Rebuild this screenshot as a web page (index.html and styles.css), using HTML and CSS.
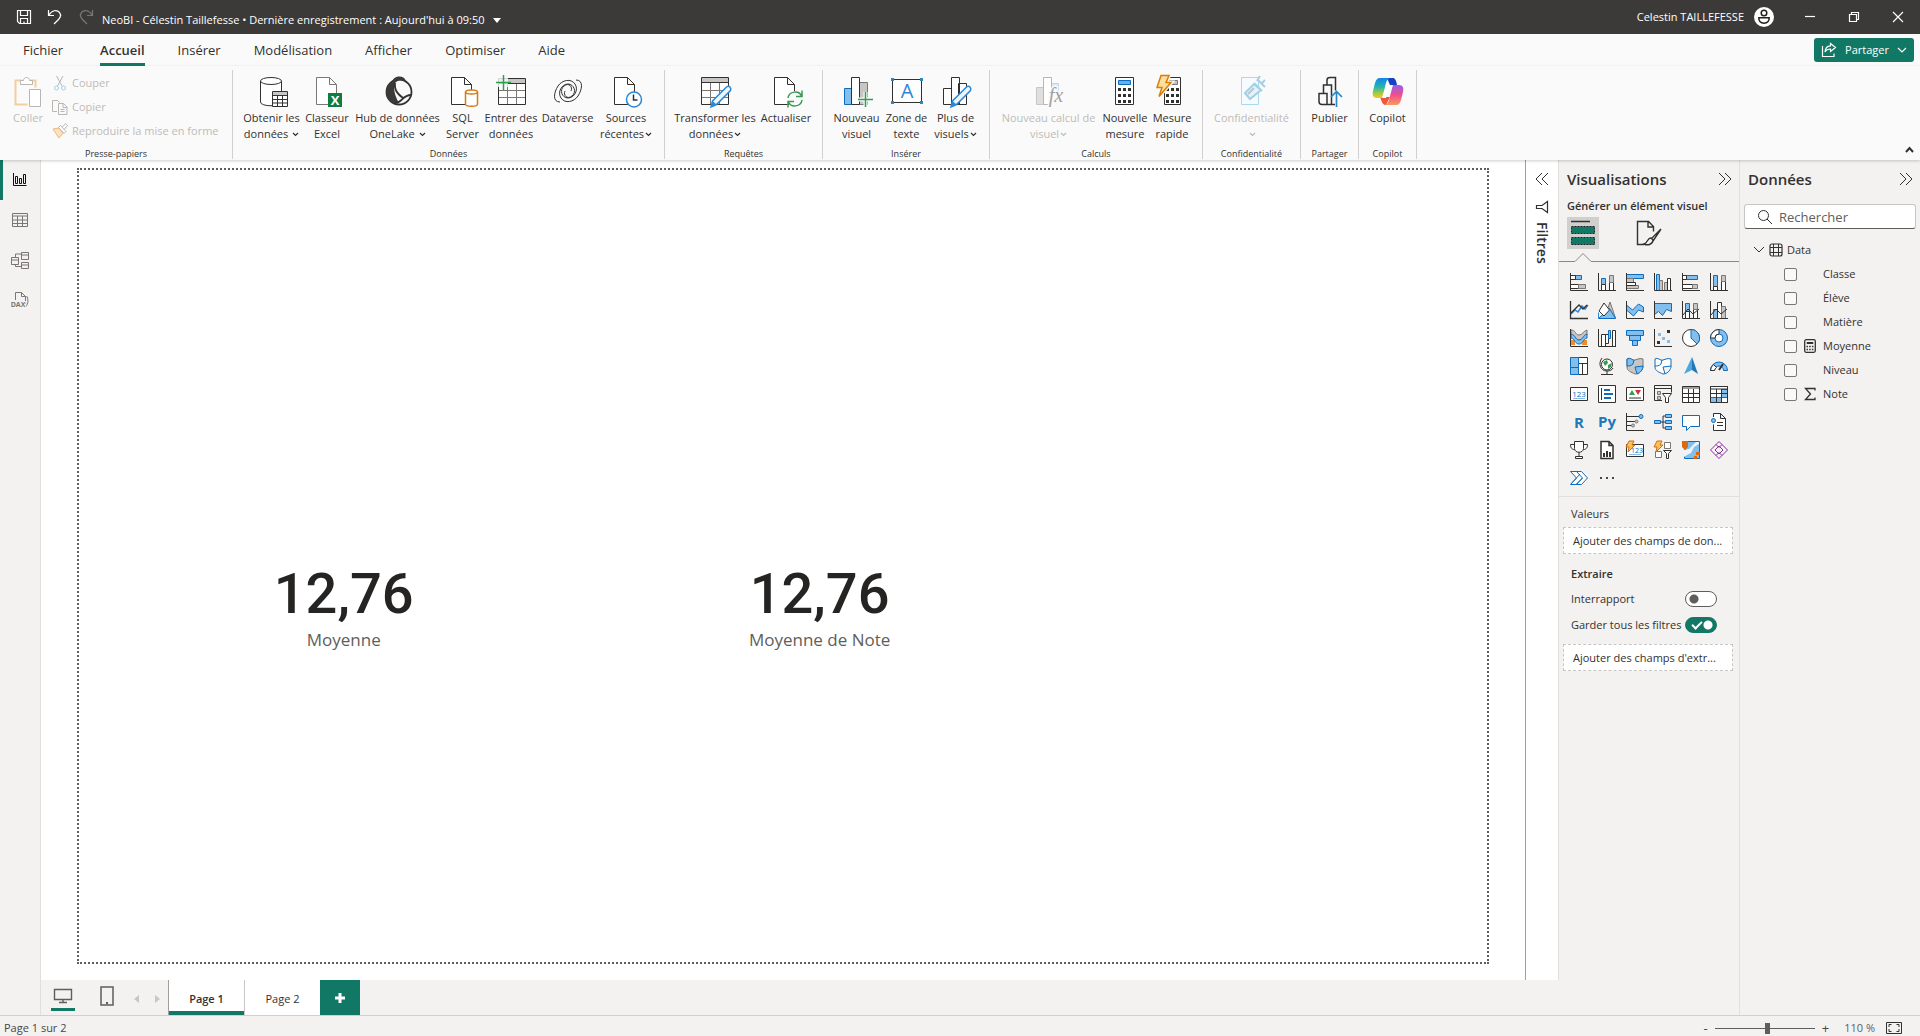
FILE: index.html
```html
<!DOCTYPE html>
<html lang="fr">
<head>
<meta charset="utf-8">
<title>NeoBI</title>
<link rel="stylesheet" href="styles.css">
</head>
<body>
<header class="titlebar">
  <button class="tb-btn" aria-label="Enregistrer"><svg width="18" height="18" viewBox="0 0 18 18"><path class="l" d="M2.500 2.500h13v13h-11l-2-2zM5.500 2.500v5h7v-5M5.500 15v-4.500h7v5M9 13.500v2"/></svg></button>
  <button class="tb-btn" aria-label="Annuler"><svg width="18" height="18" viewBox="0 0 18 18"><path class="l" d="M2.500 2v5.500h5.500M3 7c3-5 8-5.500 10.500-2.500s1 5.500-5.500 11.500"/></svg></button>
  <button class="tb-btn dim" aria-label="Rétablir" disabled><svg width="18" height="18" viewBox="0 0 18 18"><path class="l" d="M15.500 2v5.500h-5.500M15 7c-3-5-8-5.500-10.500-2.500s-1 5.500 5.500 11.500"/></svg></button>
  <button class="doc-title">NeoBI - Célestin Taillefesse • Dernière enregistrement : Aujourd'hui à 09:50 <svg width="8" height="5" viewBox="0 0 8 5"><path fill="currentColor" d="M0 0h8l-4 5z"/></svg></button>
  <div class="account">Celestin TAILLEFESSE
    <svg width="20" height="20" viewBox="0 0 20 20"><circle cx="10" cy="10" r="10" fill="#fff"/><circle cx="10" cy="6" r="2.800" fill="none" stroke="#222" stroke-width="1.500"/><path d="M4.800 10.800h10.400c0 3.500-2 5.400-5.200 5.400s-5.200-1.900-5.200-5.400z" fill="none" stroke="#222" stroke-width="1.500"/></svg>
  </div>
  <div class="win">
    <button aria-label="Réduire"><svg width="12" height="12" viewBox="0 0 12 12"><path class="l" d="M1 5.500h10"/></svg></button>
    <button aria-label="Restaurer"><svg width="12" height="12" viewBox="0 0 12 12"><path class="l" d="M1.500 3.500h7v7h-7zM3.500 3v-1.500h7v7h-1.500"/></svg></button>
    <button aria-label="Fermer"><svg width="12" height="12" viewBox="0 0 12 12"><path class="l" d="M1 1l10 10M11 1l-10 10"/></svg></button>
  </div>
</header>

<nav class="menu">
  <a href="#" class="first">Fichier</a><a href="#" class="on">Accueil</a><a href="#">Insérer</a><a href="#">Modélisation</a><a href="#">Afficher</a><a href="#">Optimiser</a><a href="#">Aide</a>
  <button class="share"><svg width="16" height="16" viewBox="0 0 16 16"><path class="l" d="M1.500 4v10.500h11.500v-3M9.500 1.500l5 4-5 4v-2.500c-3 0-4.500 1-5.500 3 .2-4 2-6 5.500-6.200z"/></svg>Partager<svg width="10" height="6" viewBox="0 0 10 6"><path class="l" d="M1 1l4 4 4-4"/></svg></button>
</nav>

<section class="ribbon">
  <div class="group clip">
    <div class="tools">
      <button class="big" disabled><svg width="32" height="32" viewBox="0 0 32 32"><path d="M10 5.500h-6.500v24h12M18 5.500h5.500v7" fill="none" stroke="#f3cf9c" stroke-width="2"/><path class="w" d="M8.500 7.500v-2h3c0-4 6-4 6 0h3v4h-12zM17.500 14.500h11v17h-11z"/></svg>Coller</button>
      <div class="stack">
        <button disabled><svg width="16" height="16" viewBox="0 0 16 16"><path class="k" d="M4.500 1l5.500 10M11 1l-5.500 10"/><circle class="bl" cx="4.500" cy="13" r="2"/><circle class="bl" cx="11.500" cy="13" r="2"/></svg>Couper</button>
        <button disabled><svg width="16" height="16" viewBox="0 0 16 16"><path class="k" d="M5 12.500h-4.500v-11h5l2 2M6.500 4.500h5l3.500 3.500v7.500h-8.500zM11 4.500v4h4M8.500 10.500h4M8.500 12.500h4"/></svg>Copier</button>
        <button disabled><svg width="16" height="16" viewBox="0 0 16 16"><path d="M1 6l6-1 4 5-4 5z" fill="#fbe3c0" stroke="#f0b878"/><path class="w" d="M6.500 4.500l2-2 5.500 6-2 2zM10.500 4l3-3.500 2 2-3 3.500"/></svg>Reproduire la mise en forme</button>
      </div>
    </div>
    <h2>Presse-papiers</h2>
  </div>

  <div class="group data">
    <div class="tools">
      <button class="big"><svg width="32" height="32" viewBox="0 0 32 32"><path class="w" d="M4.500 6v21c0 5 21 5 21 0v-21"/><ellipse class="w" cx="15" cy="6" rx="10.500" ry="3.500"/><path class="w" d="M16.500 16.500h15v15h-15z"/><path fill="#c8c6c4" d="M17 17h14v3h-14z"/><path class="k" d="M16.500 20.500h15M16.500 24.500h15M16.500 28h15M21.500 20v11M26.500 20v11"/></svg>Obtenir les<br>données <svg class="chev" viewBox="0 0 7 5"><path class="l" d="M1 1l2.500 2.500 2.500-2.500"/></svg></button>
      <button class="big"><svg width="32" height="32" viewBox="0 0 32 32"><path class="w gr" d="M5.500 2.500h13l7 7v20h-20zM18.500 2.500v7h7"/><path fill="#107c41" d="M17 18h14v14h-14z"/><text x="24" y="30" class="t" fill="#fff" font-size="13" font-weight="700">X</text></svg>Classeur<br>Excel</button>
      <button class="big"><svg width="32" height="32" viewBox="0 0 32 32"><circle class="k" cx="17" cy="17" r="12.500" stroke-width="1.800"/><path fill="#3b3a39" d="M10 7c2-7 12-7 14-1-4-2-8-1-11 2-2 6 0 13 4 20-13 2-17-12-7-21z"/><path class="k" stroke-width="1.800" d="M13 8c-1 8 4 12 8 15M12 28c8 1 8-8 17-8"/></svg>Hub de données<br>OneLake <svg class="chev" viewBox="0 0 7 5"><path class="l" d="M1 1l2.500 2.500 2.500-2.500"/></svg></button>
      <button class="big"><svg width="32" height="32" viewBox="0 0 32 32"><path class="w" d="M4.500 2.500h13l7 7v20h-20zM17.500 2.500v7h7"/><path d="M18.500 17v12c0 3 12 3 12 0v-12" fill="#fff" stroke="#d87a16" stroke-width="1.500"/><ellipse cx="24.500" cy="17" rx="6" ry="2" fill="#fff" stroke="#d87a16" stroke-width="1.500"/></svg>SQL<br>Server</button>
      <button class="big"><svg width="32" height="32" viewBox="0 0 32 32"><path class="w" d="M3.500 3.500h27v26h-27z"/><path fill="#c8c6c4" d="M4 4h26v4h-26z"/><path class="k" d="M3.500 8.500h27"/><path class="gl" d="M4 15.500h26M4 22.500h26M12.500 9v20M21.500 9v20"/><path d="M0 0h13v12h-13z" fill="#fafafa" opacity=".8"/><path d="M8.500 0v16M1 7.500h15" stroke="#2f9e4f" stroke-width="1.500"/></svg>Entrer des<br>données</button>
      <button class="big"><svg width="32" height="32" viewBox="0 0 32 32"><path class="k" d="M24 5c8 0 6 10 2 16s-13 8-17 2 1-14 7-14 9 8 4 12-9-1-7-5M8 27c-8 0-6-10-2-16s13-8 17-2-1 14-7 14-9-8-4-12 9 1 7 5"/></svg>Dataverse</button>
      <button class="big"><svg width="32" height="32" viewBox="0 0 32 32"><path class="w" d="M4.500 2.500h13l7 7v20h-20zM17.500 2.500v7h7"/><circle cx="24" cy="24.500" r="7.500" fill="#fff" stroke="#2b88d8" stroke-width="1.500"/><path class="k" stroke-width="1.500" d="M23.500 19.500v5.500h4"/></svg>Sources<br>récentes<svg class="chev" viewBox="0 0 7 5"><path class="l" d="M1 1l2.500 2.500 2.500-2.500"/></svg></button>
    </div>
    <h2>Données</h2>
  </div>

  <div class="group queries">
    <div class="tools">
      <button class="big"><svg width="32" height="32" viewBox="0 0 32 32"><path class="w" d="M2.500 2.500h27v27h-27z"/><path fill="#c8c6c4" d="M3 3h26v4h-26z"/><path class="k" d="M2.500 7.500h27"/><path class="gl" d="M3 15.500h26M3 22.500h26M11.500 8v21M20.500 8v21"/><path class="pen" d="M12 32l1.500-6 14-14c3-2 5 1 4 3.500l-14 14z"/><path d="M12 32l1.500-6 4 3.500z" fill="#2b88d8"/></svg>Transformer les<br>données<svg class="chev" viewBox="0 0 7 5"><path class="l" d="M1 1l2.500 2.500 2.500-2.500"/></svg></button>
      <button class="big"><svg width="32" height="32" viewBox="0 0 32 32"><path class="w" d="M4.500 2.500h13l7 7v20h-20zM17.500 2.500v7h7"/><circle cx="25" cy="24" r="8" fill="#fafafa"/><path d="M18 23c1-7 11-8 13.500-2M32 15.500v6h-6M32 25c-1 7-11 8-13.500 2M18 32.500v-6h6" fill="none" stroke="#3a9a55" stroke-width="1.500"/></svg>Actualiser</button>
    </div>
    <h2>Requêtes</h2>
  </div>

  <div class="group insert">
    <div class="tools">
      <button class="big"><svg width="32" height="32" viewBox="0 0 32 32"><path d="M3.500 13.500h8v16h-8z" fill="#83beec" stroke="#0f6cbd"/><path d="M18.500 7.500h8v22h-8z" class="g"/><path class="w" d="M10.500 2.500h8v27h-8z"/><path d="M24.500 17v15M17 24.500h15" stroke="#fafafa" stroke-width="4"/><path d="M24.500 17v15M17 24.500h15" stroke="#2f9e4f" stroke-width="1.500"/></svg>Nouveau<br>visuel</button>
      <button class="big"><svg width="32" height="32" viewBox="0 0 32 32"><path class="w" d="M1.500 4.500h29v23h-29z"/><path fill="#2b88b8" d="M0 3h3v3H0zM29 3h3v3h-3zM0 26h3v3H0zM29 26h3v3h-3z"/><text x="16" y="23" class="t" fill="#2b88d8" font-size="20">A</text></svg>Zone de<br>texte</button>
      <button class="big"><svg width="32" height="32" viewBox="0 0 32 32"><path class="w" d="M3.500 13.500h8v16h-8zM18.500 8.500h8v21h-8zM11.500 2.500h8v27h-8z"/><path class="pen" d="M11 32l1.500-6 14-14c3-2 5 1 4 3.500l-14 14z"/><path d="M11 32l1.500-6 4 3.500z" fill="#2b88d8"/></svg>Plus de<br>visuels<svg class="chev" viewBox="0 0 7 5"><path class="l" d="M1 1l2.500 2.500 2.500-2.500"/></svg></button>
    </div>
    <h2>Insérer</h2>
  </div>

  <div class="group calc">
    <div class="tools">
      <button class="big" disabled><svg width="32" height="32" viewBox="0 0 32 32"><path d="M3.500 12.500h7v17h-7z" fill="#e1dfdd" stroke="#c8c6c4"/><path d="M18.500 8.500h7v8h-7z" fill="#d6ebfa" stroke="#b5d8ee"/><path class="w" d="M10.500 2.500h8v27h-8z"/><text x="23" y="27" class="t serif" fill="#a19f9d" stroke="#fafafa" stroke-width="3" paint-order="stroke" font-size="20" font-style="italic">fx</text></svg>Nouveau calcul de<br>visuel<svg class="chev" viewBox="0 0 7 5"><path class="l" d="M1 1l2.500 2.500 2.500-2.500"/></svg></button>
      <button class="big"><svg width="32" height="32" viewBox="0 0 32 32"><path class="w" d="M6.500 2.500h18v27h-18z"/><path d="M9.500 5.500h12v4h-12z" fill="#5eb2f2" stroke="#0f6cbd"/><path d="M9 14.500h13M9 20.500h13M9 26.500h13" stroke="#323130" stroke-width="3" stroke-dasharray="3 2"/></svg>Nouvelle<br>mesure</button>
      <button class="big"><svg width="32" height="32" viewBox="0 0 32 32"><path class="w" d="M8.500 2.500h16v27h-16z"/><path d="M12.500 5.500h9v4h-9z" class="g"/><path d="M10 14.500h13M10 20.500h13M10 26.500h13" stroke="#323130" stroke-width="3" stroke-dasharray="3 2"/><path d="M5 .5h8l-3 7h5l-12 14 3-9h-5z" fill="#fce0a0" stroke="#fafafa" stroke-width="4"/><path d="M5 .5h8l-3 7h5l-12 14 3-9h-5z" fill="#fce0a0" stroke="#e07b00" stroke-width="1.500"/></svg>Mesure<br>rapide</button>
    </div>
    <h2>Calculs</h2>
  </div>

  <div class="group priv">
    <div class="tools">
      <button class="big" disabled><svg width="32" height="32" viewBox="0 0 32 32"><path d="M5.500 2.500h17v27h-17z" fill="#f5fbfe" stroke="#a9d8ef"/><path d="M9 18l9-9 7 6-11 9zM21 4l8 8M18 8l8 8M24 1l-3 5M29 5l-4 4" fill="#e4f2fa" stroke="#a3cfe6" stroke-width="2"/><path d="M12 19l6-6" stroke="#b9c6cd" stroke-width="2"/></svg>Confidentialité<br><svg class="chev" viewBox="0 0 7 5"><path class="l" d="M1 1l2.500 2.500 2.500-2.500"/></svg></button>
    </div>
    <h2>Confidentialité</h2>
  </div>

  <div class="group pub">
    <div class="tools">
      <button class="big"><svg width="32" height="32" viewBox="0 0 32 32"><path class="k" stroke-width="1.500" d="M21 29.500h-13c-2 0-3-1-3-3v-8h8v11M9.500 18v-8h8v8M13 10v-5c0-2 1-2.500 3-2.500h5.500v13M17.500 18v11"/><path d="M22.500 32v-15M17 22l5.500-5.500 5.500 5.500" fill="none" stroke="#2b88c8" stroke-width="1.700"/></svg>Publier</button>
    </div>
    <h2>Partager</h2>
  </div>

  <div class="group cop">
    <div class="tools">
      <button class="big"><svg width="32" height="32" viewBox="0 0 32 32"><defs><linearGradient id="ca" x1="0" y1="0" x2="0" y2="1"><stop offset="0" stop-color="#1585ea"/><stop offset=".45" stop-color="#25b5b0"/><stop offset=".75" stop-color="#9fcb3f"/><stop offset="1" stop-color="#f7c52c"/></linearGradient><linearGradient id="cb" x1="0" y1="0" x2="0" y2="1"><stop offset="0" stop-color="#9a5ce8"/><stop offset=".5" stop-color="#ef4f8c"/><stop offset="1" stop-color="#fb9a5b"/></linearGradient></defs><path fill="#1b3fc4" d="M15 3h6c2 0 3 2 4 7h-7z"/><path fill="#f0583a" d="M8 22h10l-4 8c-3 0-4-2-6-8z"/><path fill="url(#ca)" d="M8 3h10c-3 1-4 4-5 9l-3 11H5c-4 0-5-3-4-7l2-8c1-3 2-5 5-5z"/><path fill="url(#cb)" d="M24 30H13c3-1 4-4 5-9l3-11h6c4 0 5 3 4 7l-2 8c-1 3-2 5-5 5z"/><path fill="#fff" d="M15 10h3l-4 13h-4z"/></svg>Copilot</button>
    </div>
    <h2>Copilot</h2>
  </div>
  <button class="collapse" aria-label="Réduire le ruban"><svg width="9" height="6" viewBox="0 0 9 6"><path class="k" stroke-width="2" d="M1 5l3.500-4 3.500 4"/></svg></button>
</section>

<div class="work">
  <nav class="rail">
    <a href="#" class="on" aria-label="Rapport"><svg width="16" height="16" viewBox="0 0 16 16"><path class="k" d="M1.500 1v12.500h13M3.500 4.500h2v7h-2zM7.500 6.500h2v5h-2zM11.500 2.500h2v9h-2z"/></svg></a>
    <a href="#" aria-label="Table"><svg width="16" height="16" viewBox="0 0 16 16"><path class="k" d="M.5 1.500h15v13h-15zM.5 4h15M.5 8h15M.5 11.500h15M5.500 4v10M10.500 4v10"/></svg></a>
    <a href="#" aria-label="Modèle"><svg width="18" height="18" viewBox="0 0 18 18"><path class="k" d="M.5 6.500h7v7h-7zM.5 9h7M10.500 1.500h7v7h-7zM10.500 4h7M10.500 11.500h7v6h-7zM10.500 14h7M4.500 6v-3h6M4.500 14v1.500h6"/></svg></a>
    <a href="#" aria-label="DAX"><svg width="18" height="18" viewBox="0 0 18 18"><path class="k" d="M4.500 9v-7.500h6l4 4v7.500M10.500 1.500v4h4M15.500 5c2 2 2 8-1 11"/><text x="7" y="16" class="t" fill="#797673" stroke="#f3f2f1" stroke-width="2" paint-order="stroke" font-size="7" font-weight="700">DAX</text></svg></a>
  </nav>

  <div class="center">
    <div class="report">
      <main class="canvas">
        <div class="page">
          <figure class="card c1"><strong>12,76</strong><figcaption>Moyenne</figcaption></figure>
          <figure class="card c2"><strong>12,76</strong><figcaption>Moyenne de Note</figcaption></figure>
        </div>
      </main>
      <aside class="filters">
        <button aria-label="Développer"><svg width="14" height="14" viewBox="0 0 14 14"><path class="k" d="M7 1l-6 6 6 6M13 1l-6 6 6 6"/></svg></button>
        <svg class="funnel" width="12" height="12" viewBox="0 0 12 12"><path class="k" stroke-width="1.200" d="M11.500 .5v11l-5.500-4h-5.500v-3h5.500z"/></svg>
        <h2>Filtres</h2>
      </aside>
    </div>
    <div class="pages">
      <button class="view on" aria-label="Bureau"><svg width="20" height="16" viewBox="0 0 20 16"><path class="k" stroke-width="1.400" d="M1.500 1.500h17v10h-17zM10 12v2.500M6 14.500h8"/></svg></button>
      <button class="view" aria-label="Mobile"><svg width="14" height="20" viewBox="0 0 14 20"><path class="k" stroke-width="1.500" d="M1 1h12v18h-12z"/><path fill="#605e5c" d="M6 16h2v2h-2z"/></svg></button>
      <button class="arrow" aria-label="Page précédente"><svg width="5" height="8" viewBox="0 0 5 8"><path fill="#c8c6c4" d="M5 0v8l-5-4z"/></svg></button>
      <button class="arrow" aria-label="Page suivante"><svg width="5" height="8" viewBox="0 0 5 8"><path fill="#c8c6c4" d="M0 0v8l5-4z"/></svg></button>
      <button class="tab on">Page 1</button>
      <button class="tab">Page 2</button>
      <button class="add" aria-label="Nouvelle page"><svg width="12" height="12" viewBox="0 0 12 12"><path d="M6 1v10M1 6h10" stroke="#fff" stroke-width="3"/></svg></button>
    </div>
  </div>

  <aside class="pane vis">
    <header><h2>Visualisations</h2><button aria-label="Réduire"><svg width="14" height="14" viewBox="0 0 14 14"><path class="k" d="M1 1l6 6-6 6M7 1l6 6-6 6"/></svg></button></header>
    <h3>Générer un élément visuel</h3>
    <div class="modes">
      <button class="on" aria-label="Générer"><svg width="26" height="26" viewBox="0 0 26 26"><path d="M1 1.500h19" stroke="#323130" stroke-width="1.500"/><path d="M1.500 6.500h23v7h-23zM1.500 17.500h23v7h-23z" fill="#117865" stroke="#222" stroke-dasharray="2 1"/></svg></button>
      <button aria-label="Mettre en forme"><svg width="26" height="26" viewBox="0 0 26 26"><path class="k" stroke-width="1.400" d="M8 24.500h-6.500v-23h11l5 5v5M12 1.500v5.500h5.500M25 9l-10 10M25 9l-8 12M15 18c-4 0-3 5-7 6 4 2 9 0 9-4z"/></svg></button>
    </div>
    <svg class="notch" width="180" height="10" viewBox="0 0 180 10"><path fill="#f3f2f1" stroke="#8a8886" d="M0 9.500h16l8-8 8 8h148"/></svg>
    <div class="grid">
      <button aria-label="Barres empilées"><svg viewBox="0 0 18 18"><path class="b" d="M.5 2.500h11v4h-11z"/><path class="w" d="M.5 2.500h5v4h-5zM.5 11.500h8v4h-8z"/><path class="g" d="M8.500 11.500h7v4h-7z"/><path class="k" d="M.5 0v17.500h17.500"/></svg></button>
      <button aria-label="Colonnes empilées"><svg viewBox="0 0 18 18"><path class="b" d="M3.500 5.500h4v6h-4z"/><path class="w" d="M3.500 11.500h4v6h-4zM11.500 9.500h4v8h-4z"/><path class="g" d="M11.500 2.500h4v7h-4z"/><path class="k" d="M.5 0v17.500h17.500"/></svg></button>
      <button aria-label="Barres groupées"><svg viewBox="0 0 18 18"><path class="b" d="M.5 1.500h17v4h-17z"/><path class="g" d="M.5 5.500h7v4h-7zM.5 12.500h12v3h-12z"/><path class="w" d="M.5 9.500h9v3h-9z"/><path class="k" d="M.5 0v17.500h17.500"/></svg></button>
      <button aria-label="Colonnes groupées"><svg viewBox="0 0 18 18"><path class="b" d="M2.500 1.500h3v16h-3z"/><path class="g" d="M5.500 7.500h3v10h-3zM10.500 9.500h3v8h-3z"/><path class="w" d="M13.500 5.500h3v12h-3z"/><path class="k" d="M.5 0v17.500h17.500"/></svg></button>
      <button aria-label="Barres empilées 100 %"><svg viewBox="0 0 18 18"><path class="b" d="M4.500 2.500h11v4h-11z"/><path class="w" d="M.5 2.500h4v4h-4zM.5 11.500h10v4h-10z"/><path class="g" d="M10.500 11.500h5v4h-5z"/><path class="k" d="M.5 0v17.500h17.500"/></svg></button>
      <button aria-label="Colonnes empilées 100 %"><svg viewBox="0 0 18 18"><path class="b" d="M3.500 2.500h4v11h-4z"/><path class="w" d="M3.500 13.500h4v4h-4zM11.500 8.500h4v9h-4z"/><path class="g" d="M11.500 2.500h4v6h-4z"/><path class="k" d="M.5 0v17.500h17.500"/></svg></button>

      <button aria-label="Courbes"><svg viewBox="0 0 18 18"><path class="bl" stroke-width="1.500" d="M1 13l4-4 3 2 4-6 3 3 3-4"/><path class="k" stroke-width="1.300" d="M1 12l8-8 4 4 4-4M.5 0v17.500h17.500"/></svg></button>
      <button aria-label="Aires"><svg viewBox="0 0 18 18"><path class="g" d="M12 1l5.500 16h-11z"/><path class="b" d="M.5 17.500l11-10 6 10z"/><path class="w" d="M6 2l5.500 7-5.500 6-5-5z"/><path class="bl" d="M.5 17.500v-6"/></svg></button>
      <button aria-label="Aires empilées"><svg viewBox="0 0 18 18"><path class="b" d="M.5 4l6 5 6-6 5 3v5l-5-2-5 6-7-6z"/><path class="k" d="M.5 0v17.500h17.500"/></svg></button>
      <button aria-label="Aires 100 %"><svg viewBox="0 0 18 18"><path class="b" d="M.5 2.500h17v8l-5-2-4 6-4-4-4 3z"/><path class="k" d="M.5 0v17.500h17.500"/></svg></button>
      <button aria-label="Courbe et colonnes empilées"><svg viewBox="0 0 18 18"><path class="b" d="M3.500 2.500h4v8h-4z"/><path class="w" d="M3.500 10.500h4v7h-4zM11.500 8.500h4v9h-4z"/><path class="g" d="M11.500 2.500h4v6h-4z"/><path class="k" d="M.5 0v17.500h17.500M1 14l5-6 5 5 6-5"/></svg></button>
      <button aria-label="Courbe et colonnes groupées"><svg viewBox="0 0 18 18"><path class="b" d="M3.500 8.500h4v9h-4z"/><path class="w" d="M7.500 1.500h4v16h-4z"/><path class="g" d="M11.500 5.500h4v12h-4z"/><path class="k" d="M.5 0v17.500h17.500M1 14l5-6 5 5 6-5"/></svg></button>

      <button aria-label="Ruban"><svg viewBox="0 0 18 18"><path class="g" d="M1 1c5 0 4 5 8 5s4-4 8-5v5c-4 1-4 5-8 5s-4-5-8-5z"/><path d="M1 16h4v-5H1zM12 16h5v-5h-5z" fill="#f28c28"/><path class="b" d="M1 5c5 1 4 6 8 6s4-5 8-6v4c-4 1-4 6-8 6s-4-5-8-6z"/><path class="k" d="M.5 0v17.500h17.500"/></svg></button>
      <button aria-label="Cascade"><svg viewBox="0 0 18 18"><path class="w" d="M3.500 5.500h4v12h-4zM7.500 5.500h3v9h-3zM14.500 1.500h3v16h-3z"/><path class="b" d="M10.500 1.500h2v8h-2z"/><path class="k" d="M.5 0v17.500h17.500"/></svg></button>
      <button aria-label="Entonnoir"><svg viewBox="0 0 18 18"><path class="b" d="M.5 1.500h17v5h-17zM3.500 6.500h11v5h-11zM6.500 11.500h5v5h-5z"/></svg></button>
      <button aria-label="Nuage de points"><svg viewBox="0 0 18 18"><path class="k" d="M.5 0v17.500h17.500"/><path fill="#323130" d="M13 1h3v3h-3zM3 12h3v3h-3z"/><path fill="#83beec" d="M4 4h3v3h-3zM8 8h3v3h-3zM13 11h3v3h-3z"/></svg></button>
      <button aria-label="Secteurs"><svg viewBox="0 0 18 18"><circle class="w" cx="9" cy="9" r="8.500"/><path class="b" d="M9 .5a8.500 8.500 0 0 1 6 14.500l-6-6z"/></svg></button>
      <button aria-label="Anneau"><svg viewBox="0 0 18 18"><circle class="b" cx="9" cy="9" r="8.500"/><circle cx="9" cy="9" r="4" fill="#fff" stroke="#0f6cbd"/><path d="M.5 9a8.500 8.500 0 0 1 8.500-8.500v4.500a4 4 0 0 0-4 4z" class="w"/></svg></button>

      <button aria-label="Treemap"><svg viewBox="0 0 18 18"><path class="w" d="M8.500 .5h9v17h-9zM8.500 6.500h9M12.500 6.500v11"/><path class="b" d="M.5 .5h8v10h-8zM.5 10.500h8v7h-8z"/></svg></button>
      <button aria-label="Carte"><svg viewBox="0 0 18 18"><circle class="w" cx="9" cy="7.500" r="5.500"/><path fill="#3a9a55" d="M5 5l4-2 1 3-3 3zM10 8l4-2-1 4-3 2z"/><path class="k" d="M4 1c-4 5-2 13 5 13 3 0 5-1 6-3M9 14v3M3 17.500h12"/></svg></button>
      <button aria-label="Carte choroplèthe"><svg viewBox="0 0 18 18"><path class="g" stroke="#484644" d="M1 2c3-2 5 2 8 1s5-2 8-1v8c-1 4-4 7-8 7-4-2-8-3-8-7z"/><path class="b" d="M1 2c3-2 5 1 7 1l-1 4c-2 2-4 2-6 2zM9 10l8-1c0 4-3 7-6 8z"/></svg></button>
      <button aria-label="Carte de formes"><svg viewBox="0 0 18 18"><path d="M1 2c3-2 5 2 8 1s5-2 8-1v8c-1 4-4 7-8 7-4-2-8-3-8-7zM8 3l-1 4c-2 2-4 2-6 2M17 9l-8 1 2 7" fill="#fff" stroke="#0f6cbd"/></svg></button>
      <button aria-label="Azure Maps"><svg viewBox="0 0 18 18"><path d="M10 0l6 17-6-4z" fill="#2376b8"/><path d="M10 0l-8 17 8-4z" fill="#4aa8dc"/></svg></button>
      <button aria-label="Jauge"><svg viewBox="0 0 18 18"><path d="M.5 13.500a8.500 8.500 0 0 1 17 0h-4a4.500 4.500 0 0 0-9 0z" class="b"/><path class="w" d="M.5 13.500a8.500 8.500 0 0 1 3-6l3 3a4.500 4.500 0 0 0-2 3z"/><path stroke="#323130" stroke-width="2" d="M9 13l4-6"/></svg></button>

      <button aria-label="Carte à un chiffre"><svg viewBox="0 0 18 18"><path class="w" d="M.5 2.500h17v13h-17z"/><text x="9" y="12" class="t" fill="#0f6cbd" font-size="8">123</text><path d="M3 13.500h12" stroke="#83beec"/></svg></button>
      <button aria-label="Carte à plusieurs lignes"><svg viewBox="0 0 18 18"><path class="w" d="M.5 .5h17v17h-17z"/><path class="k" d="M3.500 3v12"/><path d="M6 5h6M6 9h9M6 13h7" stroke="#0f6cbd" stroke-width="2"/></svg></button>
      <button aria-label="KPI"><svg viewBox="0 0 18 18"><path class="w" d="M.5 2.500h17v13h-17zM3 13h12"/><path fill="#2f9e4f" d="M3 10l3-5 3 5z"/><path fill="#d13438" d="M9 5h6l-3 5z"/></svg></button>
      <button aria-label="Segment"><svg viewBox="0 0 18 18"><path class="k" d="M8 15.500h-7.500v-15h17v7M.5 3.500h17"/><path class="g" d="M3.500 6.500h3v3h-3zM3.500 11.500h3v3h-3z"/><path class="w" d="M8.500 8.500h9l-3 4v5h-3v-5z"/></svg></button>
      <button aria-label="Tableau"><svg viewBox="0 0 18 18"><path class="w" d="M.5 1.500h17v16h-17zM.5 8.500h17M.5 12.500h17M6.500 4v13M11.500 4v13"/><path fill="#a19f9d" d="M1 2h16v2h-16z"/></svg></button>
      <button aria-label="Matrice"><svg viewBox="0 0 18 18"><path class="w" d="M.5 1.500h17v16h-17z"/><path class="b" d="M.5 12.500h11v5h-11zM11.500 4.500h6v8h-6z"/><path class="k" d="M.5 8.500h17M6.500 4v13M11.500 4v13M.5 1.500h17v16h-17zM.5 4h17"/></svg></button>

      <button aria-label="Visuel R"><svg viewBox="0 0 18 18"><text x="9" y="15" class="t" fill="#2078b8" font-size="15" font-weight="700">R</text></svg></button>
      <button aria-label="Visuel Python"><svg viewBox="0 0 18 18"><text x="9" y="14" class="t" fill="#2078b8" font-size="15" font-weight="700">Py</text></svg></button>
      <button aria-label="Influenceurs clés"><svg viewBox="0 0 18 18"><path class="k" d="M.5 0v17.500h17.500M1 3.500h12M1 8.500h8M1 12.500h5"/><circle class="b" cx="15" cy="3.500" r="2"/><circle class="g" cx="10.500" cy="8.500" r="1.500"/><circle class="g" cx="7" cy="12.500" r="1.500"/></svg></button>
      <button aria-label="Arborescence"><svg viewBox="0 0 18 18"><path class="k" d="M6 9h5M9 3v12M9 3h3M9 15h3"/><path class="b" d="M.5 7.500h6v3h-6zM11.500 1.500h6v3h-6zM11.500 7.500h6v3h-6zM11.500 13.500h6v3h-6z"/></svg></button>
      <button aria-label="Questions"><svg viewBox="0 0 18 18"><path d="M.5 2.500h17v11h-9l-4 4v-4h-4z" fill="#fff" stroke="#0f6cbd"/></svg></button>
      <button aria-label="Narration"><svg viewBox="0 0 18 18"><path class="w" d="M3.500 4v-3.500h7l5 5v12h-12v-6M10.500 .5v5h5M7 9.500h6M7 12.500h6"/><circle class="b" cx="3.500" cy="7.500" r="2"/></svg></button>

      <button aria-label="Objectifs"><svg viewBox="0 0 18 18"><path class="w" d="M4.500 .5h9v7c0 5-9 5-9 0zM4.500 3.500h-4c0 4 2 5 4 5M13.500 3.500h4c0 4-2 5-4 5M9 11v4M5.500 15.500h7v2h-7z"/></svg></button>
      <button aria-label="Rapport paginé"><svg viewBox="0 0 18 18"><path class="w" stroke-width="1.500" d="M3 .5h8l4 4v13h-12zM11 .5v4h4"/><path stroke="#323130" stroke-width="2" d="M6 16v-4M9 16v-6M12 16v-5"/></svg></button>
      <button aria-label="Carte (nouveau)"><svg viewBox="0 0 18 18"><path class="w" d="M.5 3.500h17v12h-17z"/><text x="11" y="12" class="t" fill="#0f6cbd" font-size="7">123</text><path d="M3 13.500h12" stroke="#83beec"/><path class="o" d="M3 0h5l-2 4h3l-7 7 1-5h-3z"/></svg></button>
      <button aria-label="Segment (nouveau)"><svg viewBox="0 0 18 18"><path class="w gr" d="M10.500 1.500h6v6h-6zM1.500 10.500h6v6h-6z"/><path class="w" d="M9.500 9.500h8l-3 3v5h-2v-5z"/><path class="o" d="M3 0h5l-2 4h3l-7 7 1-5h-3z"/></svg></button>
      <button aria-label="ArcGIS"><svg viewBox="0 0 18 18"><path class="b" d="M4.500 .5h13v17h-15v-9z"/><path fill="#eaf5fd" d="M2 9l5-1 7-7h3v2l-5 3-3 6-4 2-3 2z"/><path d="M0 0h6v6l-3 3-3-3zM14 11h4v3h-4zM12 15h3v3h-3z" fill="#d86a10"/></svg></button>
      <button aria-label="Power Apps"><svg viewBox="0 0 18 18"><path d="M9 .5l8.500 8.500-8.500 8.500-8.500-8.500zM9 5l-4 4 4 4M9 5l4 4-4 4M6 3.500l3 3 3-3M6 14.500l3-3 3 3" fill="none" stroke="#8a2da5"/></svg></button>

      <button aria-label="Power Automate"><svg viewBox="0 0 18 18"><path d="M.5 2.500h11l6 6.500-6 6.500h-11l6-6.500zM6.500 2.500l6 6.500-6 6.500M10 5l-9 10M12.500 9l-6 6" fill="#fff" stroke="#0f6cbd"/></svg></button>
      <button aria-label="Plus"><svg viewBox="0 0 18 18"><path fill="#484644" d="M2 8h2v2h-2zM8 8h2v2h-2zM14 8h2v2h-2z"/></svg></button>
    </div>
    <div class="wells">
      <h4>Valeurs</h4>
      <div class="well">Ajouter des champs de don...</div>
      <h4 class="strong">Extraire</h4>
      <label class="opt">Interrapport<input type="checkbox" class="switch"></label>
      <label class="opt">Garder tous les filtres<input type="checkbox" class="switch" checked></label>
      <div class="well">Ajouter des champs d'extr...</div>
    </div>
  </aside>

  <aside class="pane fields">
    <header><h2>Données</h2><button aria-label="Réduire"><svg width="14" height="14" viewBox="0 0 14 14"><path class="k" d="M1 1l6 6-6 6M7 1l6 6-6 6"/></svg></button></header>
    <label class="search"><svg width="16" height="16" viewBox="0 0 16 16"><circle class="k" cx="6.500" cy="6.500" r="5"/><path class="k" d="M10 10l5 5"/></svg><input type="search" placeholder="Rechercher" aria-label="Rechercher"></label>
    <div class="root"><svg width="12" height="8" viewBox="0 0 12 8"><path class="k" d="M1 1l5 5 5-5"/></svg><svg width="14" height="14" viewBox="0 0 14 14"><rect class="k" x="1" y="1" width="12" height="12" rx="2" stroke-width="1.200"/><path class="k" d="M1 4.500h12M1 9.500h12M4.500 1v12M9.500 1v12"/></svg>Data</div>
    <ul>
      <li><label><input type="checkbox"><i></i>Classe</label></li>
      <li><label><input type="checkbox"><i></i>Élève</label></li>
      <li><label><input type="checkbox"><i></i>Matière</label></li>
      <li><label><input type="checkbox"><i><svg width="12" height="14" viewBox="0 0 12 14"><rect class="k" x=".7" y=".7" width="10.600" height="12.600" rx="1.500" stroke-width="1.300"/><path class="k" d="M3 3.500h6v1h-6z"/><path d="M2.500 7.500h7M2.500 10.500h7" stroke="#323130" stroke-width="1.500" stroke-dasharray="1.500 1.200"/></svg></i>Moyenne</label></li>
      <li><label><input type="checkbox"><i></i>Niveau</label></li>
      <li><label><input type="checkbox"><i><svg width="12" height="14" viewBox="0 0 12 14"><path class="k" stroke-width="1.300" d="M11 3.500v-2h-9.500l5 5.500-5 5.500h9.500v-2"/></svg></i>Note</label></li>
    </ul>
  </aside>
</div>

<footer class="status">
  <span>Page 1 sur 2</span>
  <div class="zoom"><button aria-label="Zoom arrière">-</button><input type="range" min="0" max="100" value="53" aria-label="Zoom"><button aria-label="Zoom avant">+</button><span>110 %</span><button aria-label="Ajuster à la page"><svg width="16" height="12" viewBox="0 0 16 12"><path class="k" d="M.5 .5h15v11h-15zM3 5v-2.500h2.500M10.500 2.500h2.500v2.500M3 7v2.500h2.500M10.500 9.500h2.500v-2.500"/></svg></button></div>
</footer>
</body>
</html>
```
FILE: styles.css
```css
* { box-sizing: border-box; }
body {
  margin: 0;
  height: 100vh;
  display: flex;
  flex-direction: column;
  background: #f3f2f1;
  color: #323130;
  font: 11px/16px "Open Sans", "Noto Sans", sans-serif;
  overflow: hidden;
}
button, input { font: inherit; color: inherit; }
button { border: 0; background: none; padding: 0; white-space: nowrap; }
a { color: inherit; text-decoration: none; }
h2, h3, h4, ul, figure { margin: 0; padding: 0; }
ul { list-style: none; }
svg { flex: none; overflow: visible; }

.l { fill: none; stroke: currentColor; stroke-width: 1.2; }
.k { fill: none; stroke: #323130; }
.w { fill: #fff; stroke: #323130; }
.b { fill: #83beec; stroke: #0f6cbd; }
.bl { fill: none; stroke: #2b88d8; }
.g { fill: #c8c6c4; stroke: #797673; }
.gr { stroke: #797673; }
.gl { fill: none; stroke: #797673; }
.o { fill: #fbc25a; stroke: #d86a10; }
.pen { fill: #eaf5fd; stroke: #2b88d8; stroke-width: 1.5; }
.t { text-anchor: middle; }
.serif { font-family: "Liberation Serif", serif; }

/* Title bar */
.titlebar {
  height: 34px;
  display: flex;
  align-items: center;
  background: #3b3a39;
  color: #fff;
  padding: 0 0 0 15px;
}
.titlebar button { display: flex; align-items: center; }
.tb-btn { width: 31px; }
.tb-btn.dim { color: #797775; width: 25px; }
.titlebar .doc-title { gap: 8px; padding-top: 6px; }
.account { margin-left: auto; display: flex; align-items: center; gap: 10px; }
.win { display: flex; margin-left: 14px; }
.win button { width: 44px; justify-content: center; }

/* Ribbon tabs */
.menu {
  height: 32px;
  display: flex;
  align-items: center;
  background: #fafafa;
  font-size: 13px;
  padding: 0 6px 0 23px;
  gap: 33px;
}
.menu a { height: 32px; line-height: 32px; }
.menu .first { margin-right: 4px; }
.menu .on { font-weight: 600; box-shadow: inset 0 -3px #117865; }
.share {
  margin-left: auto;
  height: 24px;
  display: flex;
  align-items: center;
  gap: 8px;
  padding: 0 7px;
  border-radius: 3px;
  background: #117865;
  color: #fff;
  font-size: 11px;
}

/* Ribbon */
.ribbon {
  height: 94px;
  display: flex;
  background: #fafafa;
  padding: 4px 6px 1px 0;
  position: relative;
  z-index: 1;
  box-shadow: 0 1px 3px #0003;
}
.group {
  display: flex;
  flex-direction: column;
  justify-content: space-between;
  border-right: 1px solid #d2d0ce;
}
.group h2 { font-size: 9px; line-height: 10px; font-weight: 400; text-align: center; }
.tools { display: grid; align-items: start; padding: 5px 8px 0; }
.big { line-height: 16px; text-align: center; }
.big svg { display: block; margin: 0 auto 3px; }
.big .chev { display: inline-block; width: 7px; height: 5px; margin: 0 0 1px 1px; }
.ribbon button:disabled { color: #bebbb8; }
.ribbon button:disabled .w, .ribbon button:disabled .k { stroke: #b8b5b2; }
.ribbon button:disabled .bl { stroke: #a3cfe6; }
.clip { width: 233px; }
.clip .tools { grid-template-columns: 40px 1fr; }
.stack { display: flex; flex-direction: column; align-items: flex-start; margin-top: -4px; padding-left: 4px; }
.stack button { display: flex; align-items: center; gap: 4px; height: 24px; }
.data { width: 432px; }
.data .tools { grid-template-columns: 61px 50px 91px 39px 58px 55px 62px; }
.queries { width: 158px; }
.queries .tools { grid-template-columns: 84px 58px; }
.insert { width: 167px; }
.insert .tools { grid-template-columns: 51px 49px 49px; }
.calc { width: 213px; }
.calc .tools { grid-template-columns: 101px 52px 42px; }
.priv { width: 98px; }
.pub, .cop { width: 58px; }
.collapse { margin-left: auto; align-self: flex-end; display: flex; padding: 0 0 6px; }

/* Work area */
.work { flex: 1; min-height: 0; display: flex; }
.rail { width: 41px; border-right: 1px solid #e1dfdd; }
.rail a { height: 40px; display: flex; align-items: center; justify-content: center; }
.rail .on { box-shadow: inset 3px 0 #117865; }
.rail .k { stroke: #797673; }
.rail .on .k { stroke: #111; }
.center { flex: 1; min-width: 0; display: flex; flex-direction: column; }
.report { flex: 1; display: flex; background: #fff; }
.canvas { flex: 1; display: flex; padding: 8px 36px 16px; }
.page { flex: 1; position: relative; border: 2px dotted #605e5c; }
.card { position: absolute; top: 49%; width: 26%; padding-top: 2px; text-align: center; }
.c1 { left: 5.8%; }
.c2 { left: 39.6%; }
.card strong {
  display: block;
  font: 500 56px/68px Roboto, "Open Sans", sans-serif;
  color: #252423;
}
.card figcaption { font-size: 17px; line-height: 24px; color: #605e5c; }
.filters {
  width: 34px;
  border-left: 1px solid #a19f9d;
  border-right: 1px solid #e1dfdd;
  display: flex;
  flex-direction: column;
  align-items: center;
  padding-top: 12px;
}
.filters button { display: flex; }
.funnel { margin: 15px 0 9px; }
.filters h2 { writing-mode: vertical-rl; font-size: 14px; line-height: 18px; font-weight: 600; }

.pages { height: 35px; display: flex; align-items: stretch; padding-left: 10px; }
.view { width: 24px; margin-right: 20px; display: flex; align-items: center; justify-content: center; padding-bottom: 4px; }
.view .k { stroke: #605e5c; }
.view.on { background: linear-gradient(#117865, #117865) 0 28px / 24px 3px no-repeat; }
.arrow { width: 21px; display: flex; align-items: center; justify-content: center; padding-top: 2px; }
.view + .arrow { margin-left: -13px; }
.tab { width: 76px; background: #fff; padding-top: 2px; border-left: 1px solid #c8c6c4; }
.tab.on { border-left-color: #a19f9d; box-shadow: inset 0 -4px #117865; font-weight: 600; }
.add { width: 40px; background: #117865; display: flex; align-items: center; justify-content: center; }

/* Side panes */
.pane { width: 181px; border-right: 1px solid #e1dfdd; }
.pane header { display: flex; justify-content: space-between; align-items: center; height: 38px; padding: 0 7px 0 8px; }
.pane header h2 { font-size: 15px; line-height: 20px; font-weight: 600; }
.pane header button { display: flex; }
.vis h3 { font-size: 11px; line-height: 16px; font-weight: 600; padding-left: 8px; }
.modes { display: flex; gap: 34px; padding: 3px 8px 0; }
.modes button { width: 32px; height: 32px; display: flex; align-items: center; justify-content: center; }
.modes .on { background: #d2d0ce; }
.notch { display: block; margin-top: 3px; }
.grid { display: grid; grid-template-columns: repeat(6, 28px); grid-auto-rows: 28px; padding: 6px 0 4px 6px; }
.grid button { display: flex; align-items: center; justify-content: center; }
.grid svg { width: 18px; height: 18px; }
.wells { border-top: 1px solid #e1dfdd; padding: 8px 6px 0 4px; }
.wells h4 { font-weight: 400; line-height: 18px; padding-left: 8px; }
.wells .strong { font-weight: 600; margin-top: 11px; padding-bottom: 3px; }
.well {
  height: 27px;
  line-height: 25px;
  padding: 0 4px 0 9px;
  margin: 4px 0 0;
  background: #fff;
  border: 1px dashed #c8c6c4;
  white-space: nowrap;
}
.opt { display: flex; align-items: center; justify-content: space-between; height: 26px; padding: 0 16px 0 8px; white-space: nowrap; }
.opt + .well { margin-top: 6px; }
.switch {
  appearance: none;
  flex: none;
  margin: 0;
  width: 32px;
  height: 16px;
  border: 1px solid #605e5c;
  border-radius: 8px;
  background: radial-gradient(circle at 8px 7px, #605e5c 4px, #fff 5px);
}
.switch:checked {
  border-color: #117865;
  background: radial-gradient(circle at 22px 7px, #fff 4px, #117865 5px);
}
.switch:checked::before {
  content: "";
  display: block;
  width: 8px;
  height: 4px;
  margin: 3px 0 0 6px;
  border: solid #fff;
  border-width: 0 0 2px 2px;
  transform: rotate(-45deg);
}

.fields { width: 180px; border: 0; }
.search {
  height: 25px;
  margin: 6px 4px 0;
  display: flex;
  align-items: center;
  gap: 6px;
  padding-left: 12px;
  background: #fff;
  border: 1px solid #c8c6c4;
  border-bottom-color: #605e5c;
  border-radius: 3px;
}
.search input { width: 100%; min-width: 0; border: 0; outline: 0; background: none; padding: 0; font-size: 13px; }
.search input::placeholder { color: #605e5c; }
.root { display: flex; align-items: center; gap: 4px; height: 24px; margin-top: 9px; padding-left: 13px; }
.fields li label { display: flex; align-items: center; height: 24px; padding-left: 44px; }
.fields li input { appearance: none; width: 13px; height: 13px; margin: 0; border: 1px solid #797673; border-radius: 2px; background: #fff8; }
.fields i { width: 26px; padding-left: 7px; display: flex; }

/* Status bar */
.status {
  height: 21px;
  display: flex;
  justify-content: space-between;
  align-items: center;
  padding: 4px 18px 0 4px;
  border-top: 1px solid #d2d0ce;
  color: #484644;
}
.zoom { display: flex; align-items: center; gap: 7px; }
.zoom button { display: flex; font-size: 13px; }
.zoom span { margin: 0 4px 0 8px; color: #605e5c; }
.zoom input { appearance: none; width: 100px; height: 11px; margin: 0; background: linear-gradient(#605e5c, #605e5c) center / 100% 1px no-repeat; }
.zoom input::-webkit-slider-thumb { appearance: none; width: 5px; height: 11px; background: #605e5c; }
```
